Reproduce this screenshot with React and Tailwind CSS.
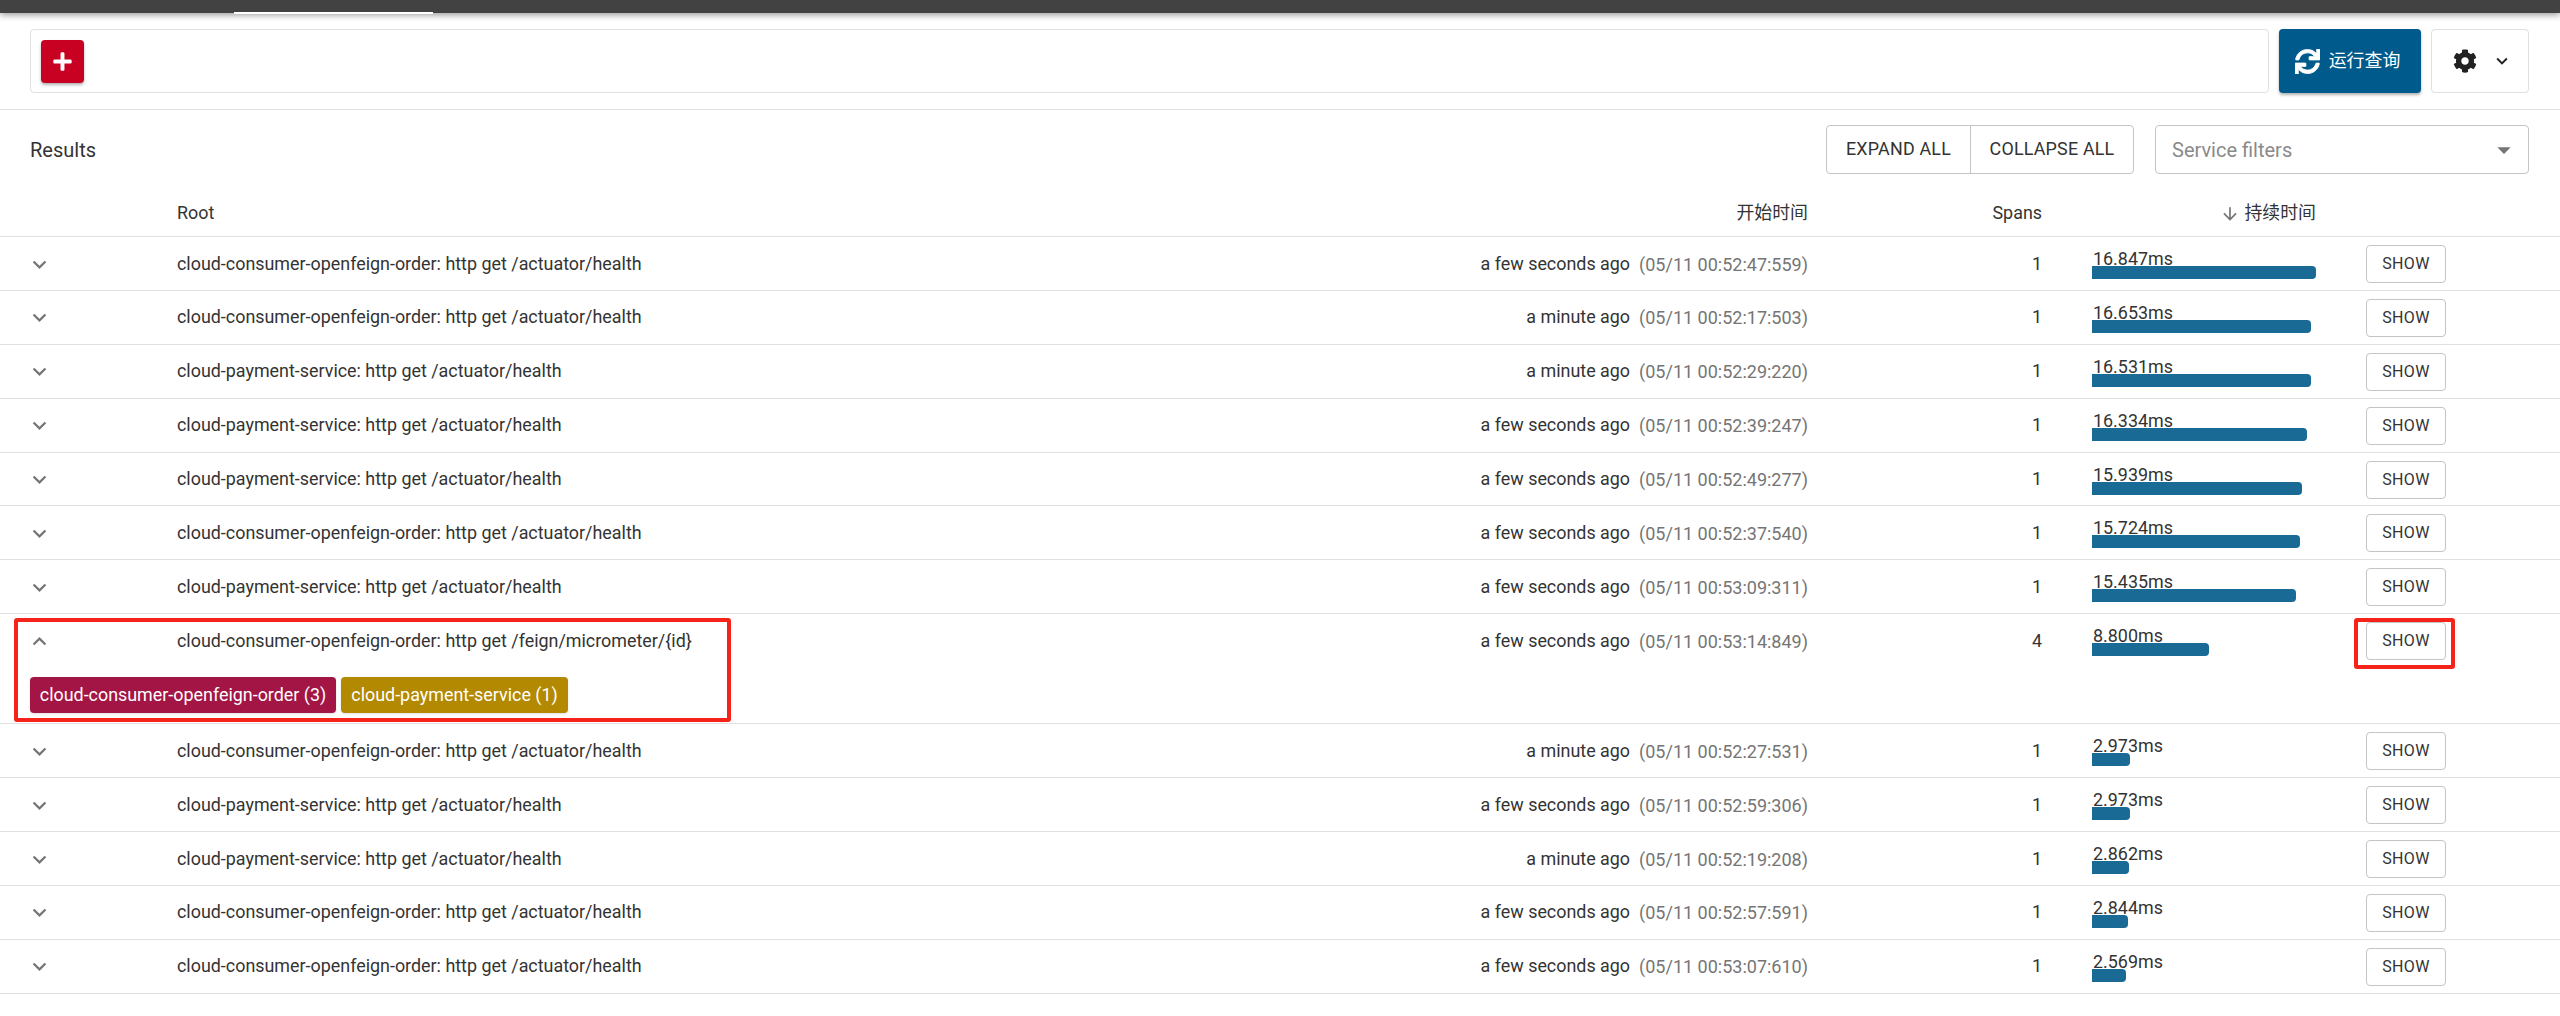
import React from 'react';
import { FaPlus, FaSync, FaCog } from 'react-icons/fa';
import { MdKeyboardArrowDown, MdKeyboardArrowUp, MdArrowDownward, MdArrowDropDown } from 'react-icons/md';

const rows = [
  { root: 'cloud-consumer-openfeign-order: http get /actuator/health', ago: 'a few seconds ago', time: '05/11 00:52:47:559', spans: 1, dur: '16.847ms', bar: 224 },
  { root: 'cloud-consumer-openfeign-order: http get /actuator/health', ago: 'a minute ago', time: '05/11 00:52:17:503', spans: 1, dur: '16.653ms', bar: 219 },
  { root: 'cloud-payment-service: http get /actuator/health', ago: 'a minute ago', time: '05/11 00:52:29:220', spans: 1, dur: '16.531ms', bar: 219 },
  { root: 'cloud-payment-service: http get /actuator/health', ago: 'a few seconds ago', time: '05/11 00:52:39:247', spans: 1, dur: '16.334ms', bar: 215 },
  { root: 'cloud-payment-service: http get /actuator/health', ago: 'a few seconds ago', time: '05/11 00:52:49:277', spans: 1, dur: '15.939ms', bar: 210 },
  { root: 'cloud-consumer-openfeign-order: http get /actuator/health', ago: 'a few seconds ago', time: '05/11 00:52:37:540', spans: 1, dur: '15.724ms', bar: 208 },
  { root: 'cloud-payment-service: http get /actuator/health', ago: 'a few seconds ago', time: '05/11 00:53:09:311', spans: 1, dur: '15.435ms', bar: 204 },
  { root: 'cloud-consumer-openfeign-order: http get /feign/micrometer/{id}', ago: 'a few seconds ago', time: '05/11 00:53:14:849', spans: 4, dur: '8.800ms', bar: 117, open: true },
  { root: 'cloud-consumer-openfeign-order: http get /actuator/health', ago: 'a minute ago', time: '05/11 00:52:27:531', spans: 1, dur: '2.973ms', bar: 38 },
  { root: 'cloud-payment-service: http get /actuator/health', ago: 'a few seconds ago', time: '05/11 00:52:59:306', spans: 1, dur: '2.973ms', bar: 38 },
  { root: 'cloud-payment-service: http get /actuator/health', ago: 'a minute ago', time: '05/11 00:52:19:208', spans: 1, dur: '2.862ms', bar: 37 },
  { root: 'cloud-consumer-openfeign-order: http get /actuator/health', ago: 'a few seconds ago', time: '05/11 00:52:57:591', spans: 1, dur: '2.844ms', bar: 36 },
  { root: 'cloud-consumer-openfeign-order: http get /actuator/health', ago: 'a few seconds ago', time: '05/11 00:53:07:610', spans: 1, dur: '2.569ms', bar: 34 },
];

const cols = 'grid grid-cols-[177px_1fr_599px_234px_50px_274px_194px]';

function Row({ row }) {
  return (
    <div className={`border-b border-[#e0e0e0] pt-2 ${row.open ? 'h-[110px]' : 'h-[53.9px]'}`}>
      <div className={cols}>
        <div className="h-[38px] flex items-center pl-[26px] text-[#757575]">
          {row.open ? <MdKeyboardArrowUp size={27} /> : <MdKeyboardArrowDown size={27} />}
        </div>
        <div className="h-[38px] flex items-center">{row.root}</div>
        <div className="h-[38px] flex items-center justify-end whitespace-nowrap">
          {row.ago}
          <span className="ml-[9px] text-[18px] text-[#757575]">({row.time})</span>
        </div>
        <div className="h-[38px] flex items-center justify-end">{row.spans}</div>
        <div />
        <div>
          <div className="mt-[7px] leading-[14px] pl-px">{row.dur}</div>
          <div className="h-[13px] bg-[#1a6a96] rounded-r-[4px]" style={{ width: row.bar }} />
        </div>
        <div>
          <button className="w-20 h-[38px] border border-[#c4c4c4] rounded-[4px] text-[16px] tracking-[0.4px] bg-white">
            SHOW
          </button>
        </div>
      </div>
      {row.open && (
        <div className="flex gap-[5px] pl-[30px] mt-[17px] text-white">
          <span className="h-9 w-[306px] flex items-center justify-center rounded-[4px] bg-[#a31545] shadow-sm">
            cloud-consumer-openfeign-order (3)
          </span>
          <span className="h-9 w-[227px] flex items-center justify-center rounded-[4px] bg-[#b28900] shadow-sm">
            cloud-payment-service (1)
          </span>
        </div>
      )}
    </div>
  );
}

export default function App() {
  return (
    <div className="relative min-h-[1016px] bg-white text-[17.9px] text-[#333] font-['Roboto','Noto_Sans_CJK_SC',sans-serif]">
      <div className="h-[13px] bg-[#424242] flex items-end shadow-[0_2px_6px_rgba(0,0,0,0.4)]">
        <div className="ml-[234px] w-[199px] h-[2px] bg-white translate-y-px" />
      </div>

      <div className="flex gap-[10px] pt-4 pb-4 pl-[30px] pr-[31px] border-b border-[#e0e0e0]">
        <div className="flex-1 h-[64px] border border-[#e0e0e0] rounded-[4px] pl-[10px] flex items-center">
          <button className="w-[43px] h-[43px] rounded-[4px] bg-[#c80021] text-white flex items-center justify-center shadow-[0_2px_3px_rgba(0,0,0,0.3)]">
            <FaPlus size={21} />
          </button>
        </div>
        <button className="w-[142px] h-[64px] pr-[5px] rounded-[4px] bg-[#005a8c] text-white flex items-center justify-center gap-[9px] shadow-[0_2px_3px_rgba(0,0,0,0.3)]">
          <FaSync size={25} stroke="currentColor" strokeWidth={16} />
          运行查询
        </button>
        <button className="w-[98px] h-[64px] pl-[6px] border border-[#e0e0e0] rounded-[4px] flex items-center justify-center gap-[14px] text-[#212121]">
          <FaCog size={24} />
          <MdKeyboardArrowDown size={22} />
        </button>
      </div>

      <div className="flex items-center pt-[15px] pl-[30px] pr-[31px]">
        <div className="flex-1 text-[20px]">Results</div>
        <div className="flex h-[49px] w-[308px] border border-[#c4c4c4] rounded-[4px] tracking-[0.2px]">
          <div className="w-[144px] border-r border-[#c4c4c4] flex items-center justify-center">EXPAND ALL</div>
          <div className="flex-1 flex items-center justify-center">COLLAPSE ALL</div>
        </div>
        <div className="ml-[21px] w-[374px] h-[49px] border border-[#c4c4c4] rounded-[4px] flex items-center justify-between pl-4 pr-[8px] text-[#8a8a8a] text-[20px]">
          Service filters
          <MdArrowDropDown size={32} className="text-[#757575]" />
        </div>
      </div>

      <div className={`${cols} h-[63px] items-end pb-[9px] border-b border-[#e0e0e0]`}>
        <div />
        <div>Root</div>
        <div className="text-right">开始时间</div>
        <div className="text-right">Spans</div>
        <div />
        <div className="flex items-center justify-end w-[224px] gap-1">
          <MdArrowDownward size={20} className="text-[#757575]" />
          持续时间
        </div>
        <div />
      </div>

      {rows.map((row, i) => (
        <Row key={i} row={row} />
      ))}

      {/* red annotation boxes drawn over the screenshot */}
      <div className="absolute left-[14px] top-[618px] w-[717px] h-[104px] border-[4px] border-[#f5231a] rounded-[3px]" />
      <div className="absolute left-[2354px] top-[618px] w-[101px] h-[51px] border-[4px] border-[#f5231a] rounded-[3px]" />
    </div>
  );
}
